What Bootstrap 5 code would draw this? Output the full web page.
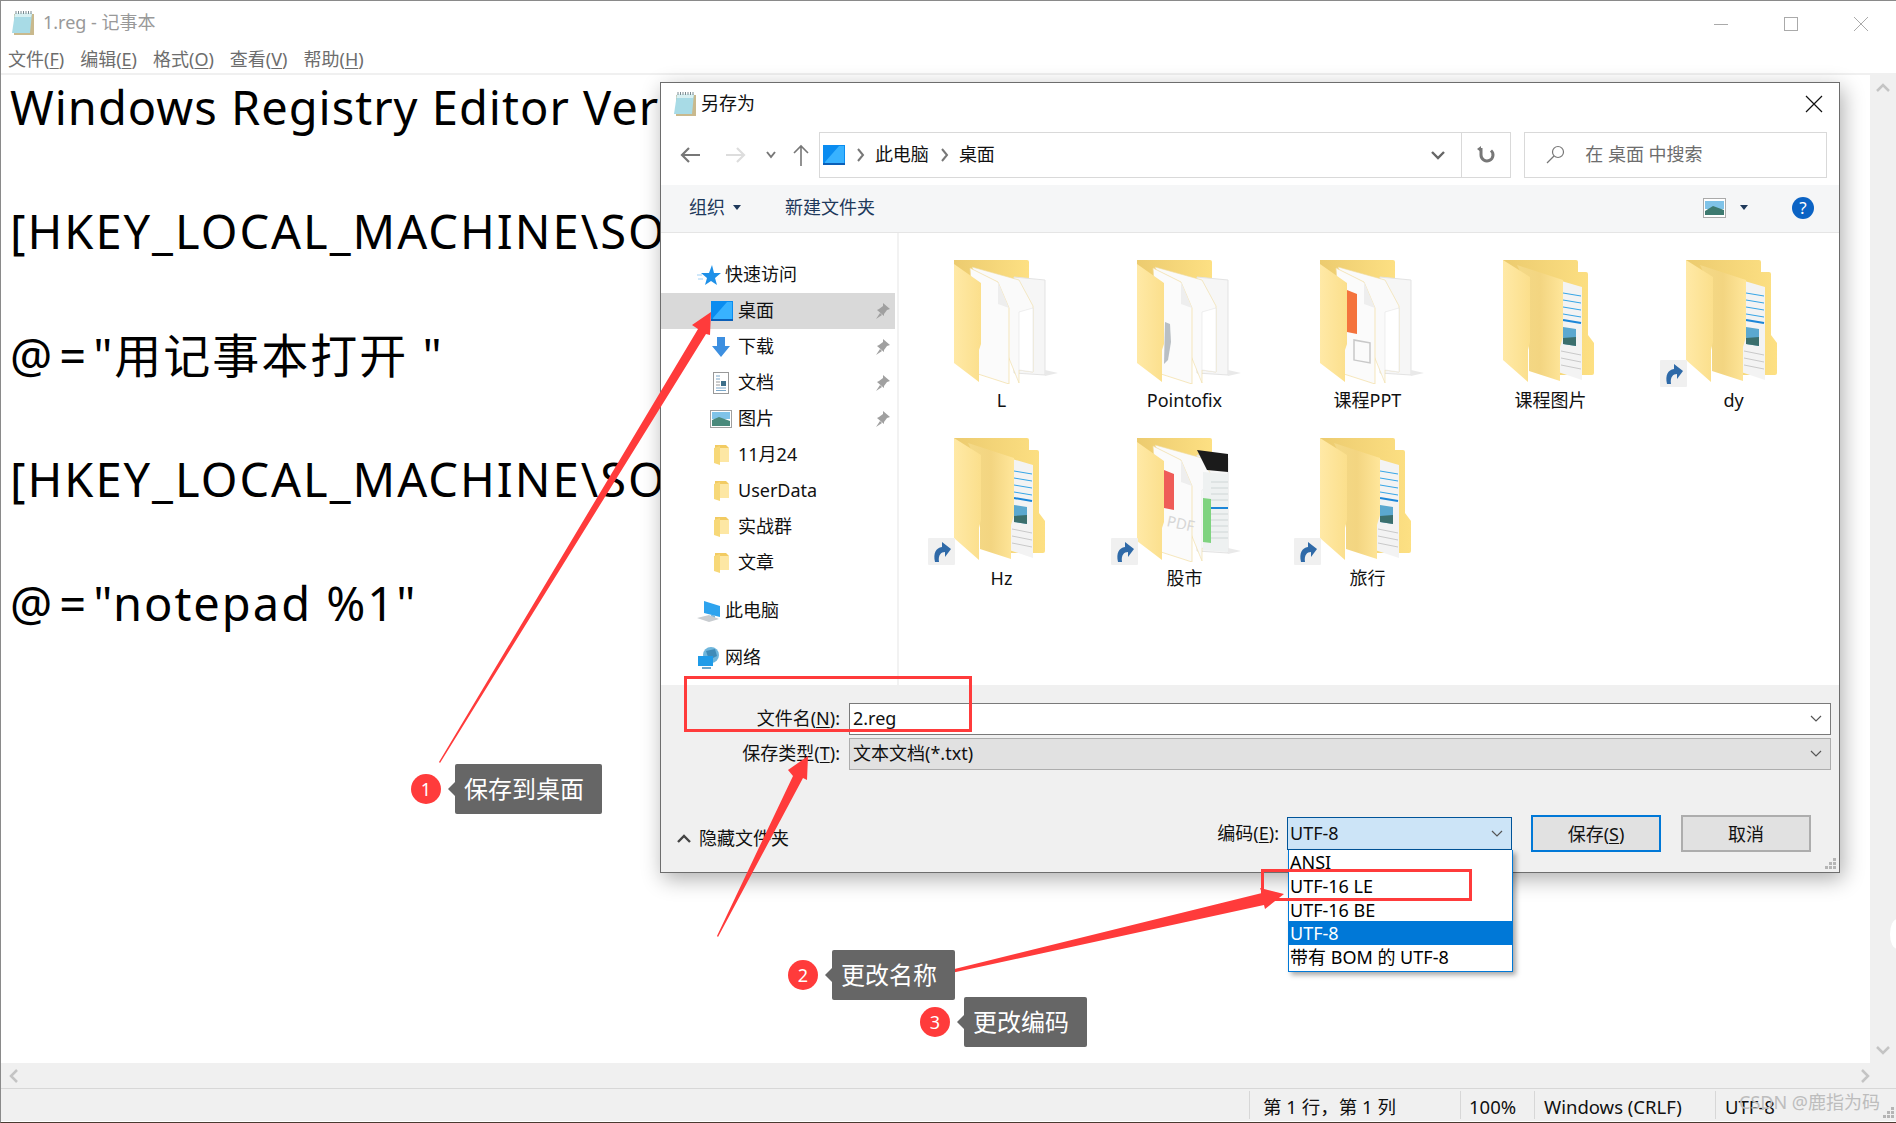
<!DOCTYPE html>
<html lang="zh-CN">
<head>
  <meta charset="UTF-8">
  <title>1.reg - 记事本</title>
  <link href="https://cdn.jsdelivr.net/npm/bootstrap@5.3.0/dist/css/bootstrap.min.css" rel="stylesheet">
  <style>
    html, body { height: 100%; overflow: hidden; }
    body { font-family: "Noto Sans", "Noto Sans CJK SC", sans-serif; font-size: 18px; line-height: 1.2; color: #111; background: #fff; }
    u { text-underline-offset: 2px; text-decoration-thickness: 1px; }

    /* notepad window */
    .np-win { position: relative; height: 1123px; border: 1px solid #8a8a8a; border-bottom-color: #4a3a30; border-right: 0; }
    .np-title { height: 44px; padding-left: 10px; color: #999; }
    .np-ctrl { width: 70px; color: #aaa; }
    .np-menu { height: 30px; padding: 2px 0 0 7px; gap: 16px; color: #6d6d6d; border-bottom: 2px solid #f0f0f0; }
    .np-body { height: 988px; }
    .np-editor { width: 1869px; padding: 1px 0 0 9px; font-size: 47px; letter-spacing: 2px; line-height: 62px; color: #000; white-space: pre; overflow: hidden; }
    .ln-tight { letter-spacing: 1px; }
    .ln-gap { letter-spacing: 7px; }
    .np-vbar { width: 26px; background: #f0f0f0; padding: 8px 0; }
    .np-hbar { height: 25px; background: #f0f0f0; padding: 0 26px 0 8px; }
    .np-status { height: 33px; padding-top: 4px; background: #f0f0f0; border-top: 1px solid #d7d7d7; color: #111; font-size: 18.500px; }
    .st-cell { height: 100%; margin-top: -4px; padding: 4px 0 0 13px; border-left: 1px solid #d7d7d7; }
    .st-pos { margin-left: 1248px; width: 211px; }
    .st-zoom { width: 74px; padding-left: 8px; }
    .st-eol { width: 181px; padding-left: 9px; }
    .st-enc { padding-left: 9px; }
    .st-mark { position: absolute; right: 16px; bottom: 7px; color: #bdbdbd; font-size: 18px; }
    .st-grip { position: absolute; right: 1px; bottom: 2px; }
    .edge-blob { position: absolute; right: -8px; top: 918px; width: 14px; height: 30px; border-radius: 50%; background: #fff; }

    /* save dialog */
    .dlg { position: absolute; left: 659px; top: 81px; width: 1180px; height: 791px; background: #fff; border: 1px solid #6d6d6d; box-shadow: 3px 6px 20px rgba(0,0,0,.32); }
    .dlg-title { height: 49px; padding: 0 16px 7px 12px; }
    .dlg-nav { height: 53px; padding: 0 12px 7px 0; }
    .nav-btns { width: 158px; padding-left: 18px; }
    .nav-fwd { margin-right: 19px; }
    .nav-drop { margin-right: 16px; }
    .addr-box { width: 693px; height: 46px; border: 1px solid #d9d9d9; padding-left: 3px; }
    .addr-sep { margin: 0 10px 0 12px; }
    .addr-drop { margin-left: auto; margin-right: 15px; }
    .addr-refresh { width: 49px; height: 100%; border-left: 1px solid #d9d9d9; }
    .search-box { width: 303px; height: 46px; margin-left: 13px; border: 1px solid #d9d9d9; padding-left: 16px; color: #6d6d6d; }
    .dlg-tools { height: 48px; background: #f5f6f7; border-bottom: 1px solid #e5e5e5; padding: 0 23px 2px 28px; color: #1e395b; }
    .tools-new { margin-left: 44px; }
    .tools-caret { margin-left: 14px; }
    .tools-help { margin-left: 44px; }
    .dlg-main { height: 452px; }
    .side-pane { width: 238px; padding-top: 24px; border-right: 2px solid #f2f2f2; }
    .side-row { height: 36px; padding-left: 49px; width: 234px; }
    .side-row.is-on { background: #d9d9d9; }
    .side-top { height: 36px; padding-left: 36px; }
    .side-ico { width: 24px; margin-right: 4px; flex: none; }
    .side-pc { margin-top: 12px; }
    .side-net { margin-top: 11px; }
    .pin { margin-left: auto; margin-right: 4px; }
    .file-grid { display: grid; grid-template-columns: repeat(5, 183px); grid-auto-rows: 178px; padding: 27px 0 0 11px; }
    .file-cell { position: relative; }
    .file-cell svg.fold { display: block; margin-left: 44px; }
    .file-label { position: absolute; left: 0; right: 0; top: 130px; text-align: center; }
    .shortcut { position: absolute; left: 18px; top: 100px; }

    .dlg-foot { height: 187px; background: #f0f0f0; padding-top: 18px; position: relative; }
    .fld-row { height: 32px; margin-bottom: 3px; }
    .fld-label { width: 188px; text-align: right; padding-right: 9px; }
    .fld-input { width: 982px; height: 32px; border: 1px solid #7a7a7a; background: #fff; padding: 0 8px 0 3px; }
    .fld-input.is-type { background: #e1e1e1; border-color: #adadad; }
    .foot-actions { margin-top: 45px; padding: 0 0 0 12px; }
    .foot-hide { padding-top: 10px; }
    .foot-chev { margin-top: 10px; }
    .enc-select { width: 225px; height: 33px; border: 1px solid #005499; background: #cce4f7; padding: 0 8px 0 2px; }
    .enc-menu { position: absolute; left: 627px; top: 165px; width: 225px; z-index: 3; padding: 0 0 2px; background: #fff; border: 1px solid #0078d7; border-top: 0; border-radius: 0; box-shadow: 3px 3px 5px rgba(0,0,0,.35); }
    .enc-menu .list-group-item { height: 24px; padding: 0 1px; border: 0; border-radius: 0; line-height: 24px; font-size: 18px; color: #000; background: transparent; white-space: pre; }
    .enc-menu .list-group-item.active { background: #0078d7; color: #fff; }
    .dlg-btn { width: 130px; height: 37px; padding: 0; margin-left: 19px; font-size: 18px; line-height: 1; border-radius: 0; background: #e1e1e1; border: 2px solid #adadad; color: #111; }
    .dlg-btn.is-default { border-color: #0078d7; }
    .dlg-btn.is-cancel { margin-right: 28px; margin-left: 20px; }
    .dlg-grip { position: absolute; right: 2px; bottom: 2px; }

    /* annotations */
    .note-layer { position: absolute; left: 0; top: 0; z-index: 5; pointer-events: none; }
    .note { position: absolute; z-index: 6; height: 50px; background: #666; color: #fff; font-size: 24px; border-radius: 2px; padding-left: 9px; }
    .note::before { content: ""; position: absolute; left: -7px; top: 18px; border: 7px solid transparent; border-left: 0; border-right-color: #666; }
    .note-num { position: absolute; z-index: 6; width: 30px; height: 30px; border-radius: 50%; background: #ff3b3b; color: #fff; font-size: 18px; font-weight: 400; padding: 0; }
    .note-a { left: 455px; top: 764px; width: 147px; }
    .note-b { left: 832px; top: 950px; width: 123px; }
    .note-c { left: 964px; top: 997px; width: 123px; }
    .num-a { left: 411px; top: 774px; }
    .num-b { left: 788px; top: 960px; }
    .num-c { left: 920px; top: 1007px; }
  </style>
</head>
<body>

<svg width="0" height="0" class="position-absolute">
  <defs>
    <linearGradient id="gFront" x1="0" y1="0" x2="1" y2="0"><stop offset="0" stop-color="#ffe9a6"/><stop offset="1" stop-color="#fbdf8c"/></linearGradient>
    <linearGradient id="gMid" x1="0" y1="0" x2="1" y2="0"><stop offset="0" stop-color="#f4d987"/><stop offset=".5" stop-color="#f3d581"/><stop offset="1" stop-color="#ffe69a"/></linearGradient>
    <linearGradient id="gBack" x1="0" y1="0" x2="1" y2="0"><stop offset="0" stop-color="#eccb6f"/><stop offset="1" stop-color="#fde083"/></linearGradient>

    <!-- open folder with a white page -->
    <symbol id="foldPaper" viewBox="0 0 104 124">
      <path d="M0 0H73a2 2 0 0 1 2 2V30H0Z" fill="url(#gBack)"/>
      <path d="M60 17 91 20V115L60 113Z" fill="#f6f6f6" stroke="#e3e3e3"/>
      <path d="M91 110 104 113 91 116Z" fill="#e9e9e9"/>
      <path d="M18 7 65 20 79 46V112L65 110V123Z" fill="#fafafa" stroke="#f0dba0" stroke-width=".6"/>
      <path d="M65 52 79 48V112L65 110Z" fill="#fff" stroke="#e4e4e4" stroke-width=".6"/>
      <path d="M16 8 44 22 55 48V124L24 114Z" fill="#fbfbfb" stroke="#f2dda0" stroke-width=".7"/>
      <path d="M44 22 44 44 55 48Z" fill="#eeeeee"/>
      <path d="M0 4 27 23V84L25 90V122L0 103Z" fill="url(#gFront)"/>
    </symbol>
    <!-- folder holding a list page -->
    <symbol id="foldList" viewBox="0 0 104 124">
      <path d="M0 0H73a2 2 0 0 1 2 2V12H83a2 2 0 0 1 2 2V75L91 83V113a2 2 0 0 1-2 2H55V30H0Z" fill="url(#gBack)"/>
      <path d="M55 20 79 27V120L55 112Z" fill="#f3f3f3"/>
      <g stroke="#36a5e6" stroke-width="1"><path d="M60 33 78 36M60 40 78 43M60 47 78 50M60 54 78 57"/><path d="M60 60 78 63" stroke-width="2" stroke="#1c86d8"/></g>
      <path d="M60 67 73 69V86L60 84Z" fill="#5ba8cf"/><path d="M60 78 73 77V86L60 84Z" fill="#3b6f6d"/>
      <g stroke="#c9c9c9" stroke-width="1"><path d="M58 91 78 95M58 98 78 102M58 105 78 109"/></g>
      <path d="M14 5 60 20V77L57 87V121L26 111V30Z" fill="url(#gMid)"/>
      <path d="M0 0 27 17V82L25 90V122L0 100Z" fill="url(#gFront)"/>
    </symbol>
    <symbol id="arrowBadge" viewBox="0 0 27 27">
      <rect width="27" height="27" rx="1" fill="#f0f0f0"/>
      <path d="M7 24C5 15 8 10 14 9V4L23 11 17 19V14C13 14 10 17 11 24Z" fill="#2f6aa8"/>
    </symbol>
    <symbol id="icDesk" viewBox="0 0 22 20">
      <rect width="22" height="20" fill="#0a8cf0"/>
      <path d="M2 17 16 1H21V18H2Z" fill="#38b2ff"/>
      <rect y="18" width="22" height="2" fill="#0b5fb8"/>
    </symbol>
    <symbol id="icFold" viewBox="0 0 16 20">
      <path d="M1 0H12L15 3V17H1Z" fill="#f2cb62"/>
      <path d="M0 3 6 1V20L0 18Z" fill="#f7d878"/>
      <path d="M6 3H15V17H6Z" fill="#fde7a4"/>
    </symbol>
    <symbol id="icPin" viewBox="0 0 16 18">
      <path d="M8 1 15 7 12 8 9 12 9 14 2 8 4 7 8 4ZM5 11 1 17 7 13Z" fill="#a0a0a0"/>
    </symbol>
    <symbol id="icNote" viewBox="0 0 24 24">
      <path d="M3 3H23V24H3Z" fill="#c9b98d"/>
      <path d="M4 2H21L19 22H1Z" fill="#a8dbe6"/>
      <path d="M4 2H21L20 6H3.5Z" fill="#d8f0f2"/>
      <path d="M5 0V3M7.500 0V3M10 0V3M12.500 0V3M15 0V3M17.500 0V3M20 0V3" stroke="#7a8a90" stroke-width="1"/>
    </symbol>
  </defs>
</svg>

<div class="np-win d-flex flex-column">

  <div class="np-title d-flex align-items-center">
    <svg width="24" height="24" class="flex-shrink-0"><use href="#icNote"/></svg>
    <span class="ms-2">1.reg - 记事本</span>
    <div class="d-flex ms-auto align-items-center">
      <div class="np-ctrl text-center"><svg width="16" height="16"><path d="M1 8.500H15" stroke="#aaa"/></svg></div>
      <div class="np-ctrl text-center"><svg width="16" height="16"><rect x="1.500" y="1.500" width="13" height="13" fill="none" stroke="#aaa"/></svg></div>
      <div class="np-ctrl text-center"><svg width="16" height="16"><path d="M1 1 15 15M15 1 1 15" stroke="#aaa"/></svg></div>
    </div>
  </div>

  <div class="np-menu d-flex align-items-center">
    <span>文件(<u>F</u>)</span><span>编辑(<u>E</u>)</span><span>格式(<u>O</u>)</span><span>查看(<u>V</u>)</span><span>帮助(<u>H</u>)</span>
  </div>

  <div class="np-body d-flex">
    <div class="np-editor"><span class="ln-tight">Windows Registry Editor Ver</span>

[HKEY_LOCAL_MACHINE\SO

<span class="ln-gap">@=</span>"用记事本打开 "

[HKEY_LOCAL_MACHINE\SO

<span class="ln-gap">@=</span>"notepad %1"</div>
    <div class="np-vbar d-flex flex-column justify-content-between align-items-center">
      <svg width="14" height="10"><path d="M1 8 7 2 13 8" fill="none" stroke="#c4c4c4" stroke-width="2.500"/></svg>
      <svg width="14" height="10"><path d="M1 2 7 8 13 2" fill="none" stroke="#c4c4c4" stroke-width="2.500"/></svg>
    </div>
  </div>

  <div class="np-hbar d-flex justify-content-between align-items-center">
    <svg width="10" height="14"><path d="M8 1 2 7 8 13" fill="none" stroke="#c4c4c4" stroke-width="2.500"/></svg>
    <svg width="10" height="14"><path d="M2 1 8 7 2 13" fill="none" stroke="#c4c4c4" stroke-width="2.500"/></svg>
  </div>

  <div class="np-status d-flex align-items-center position-relative">
    <div class="st-cell st-pos d-flex align-items-center">第 1 行，第 1 列</div>
    <div class="st-cell st-zoom d-flex align-items-center">100%</div>
    <div class="st-cell st-eol d-flex align-items-center">Windows (CRLF)</div>
    <div class="st-cell st-enc d-flex align-items-center">UTF-8</div>
    <span class="st-mark">CSDN @鹿指为码</span>
    <svg class="st-grip" width="14" height="14"><g fill="#b5b5b5"><rect x="10" y="2" width="3" height="3"/><rect x="6" y="6" width="3" height="3"/><rect x="10" y="6" width="3" height="3"/><rect x="2" y="10" width="3" height="3"/><rect x="6" y="10" width="3" height="3"/><rect x="10" y="10" width="3" height="3"/></g></svg>
  </div>

  <div class="edge-blob"></div>

  <!-- save as dialog -->
  <div class="dlg d-flex flex-column">
    <div class="dlg-title d-flex align-items-center">
      <svg width="24" height="24" class="me-1"><use href="#icNote"/></svg>
      <span>另存为</span>
      <svg class="ms-auto" width="18" height="18"><path d="M1 1 17 17M17 1 1 17" stroke="#111" stroke-width="1.200"/></svg>
    </div>

    <div class="dlg-nav d-flex align-items-center">
      <div class="nav-btns d-flex align-items-center">
        <svg width="22" height="18" class="me-4"><path d="M21 9H3M10 2 3 9 10 16" fill="none" stroke="#777" stroke-width="2.200"/></svg>
        <svg width="22" height="18" class="nav-fwd"><path d="M1 9H19M12 2 19 9 12 16" fill="none" stroke="#ddd" stroke-width="2.200"/></svg>
        <svg width="10" height="8" class="nav-drop"><path d="M1 1 5 6 9 1" fill="none" stroke="#777" stroke-width="2"/></svg>
        <svg width="18" height="22"><path d="M9 22V3M2 9 9 2 16 9" fill="none" stroke="#777" stroke-width="1.600"/></svg>
      </div>
      <div class="addr-box d-flex align-items-center">
        <svg width="22" height="20"><use href="#icDesk"/></svg>
        <svg width="8" height="14" class="addr-sep"><path d="M1 1 6 7 1 13" fill="none" stroke="#777" stroke-width="2"/></svg>
        <span>此电脑</span>
        <svg width="8" height="14" class="addr-sep"><path d="M1 1 6 7 1 13" fill="none" stroke="#777" stroke-width="2"/></svg>
        <span>桌面</span>
        <svg width="16" height="10" class="addr-drop"><path d="M2 2 8 8 14 2" fill="none" stroke="#666" stroke-width="2.400"/></svg>
        <div class="addr-refresh d-flex align-items-center justify-content-center">
          <svg width="20" height="20"><path d="M5 3V10A6 6 0 1 0 15 5.500" fill="none" stroke="#777" stroke-width="3"/><path d="M1 4 5 1V7Z" fill="#777"/></svg>
        </div>
      </div>
      <div class="search-box d-flex align-items-center">
        <svg width="20" height="20" class="me-3 ms-1"><circle cx="13" cy="7" r="5.500" fill="none" stroke="#777" stroke-width="1.200"/><path d="M9 11 2 18" stroke="#777" stroke-width="1.200"/></svg>
        <span class="ms-1">在 桌面 中搜索</span>
      </div>
    </div>

    <div class="dlg-tools d-flex align-items-center">
      <span>组织</span>
      <svg width="8" height="5" class="ms-2"><path d="M0 0H8L4 5Z" fill="#1e395b"/></svg>
      <span class="tools-new">新建文件夹</span>
      <svg width="23" height="20" class="ms-auto"><rect x=".5" y=".5" width="22" height="19" fill="#fff" stroke="#aaa"/><rect x="2" y="3" width="19" height="8" fill="#7fc3e8"/><path d="M2 13 10 8 21 12V17H2Z" fill="#3d7a70"/></svg>
      <svg width="8" height="5" class="tools-caret"><path d="M0 0H8L4 5Z" fill="#1e395b"/></svg>
      <svg width="24" height="24" class="tools-help"><circle cx="11" cy="12" r="11" fill="#0b63c4"/><text x="11" y="18" text-anchor="middle" font-size="17" font-family="Noto Sans" fill="#fff">?</text></svg>
    </div>

    <div class="dlg-main d-flex">
      <div class="side-pane">
        <div class="side-top d-flex align-items-center">
          <svg width="24" height="22" class="side-ico"><path d="M15 1 17 9 24 9 18 14 20 21 14 17 8 21 10 14 4 9 12 9Z" fill="#1e90e8"/><path d="M0 11H5M1 15H6" stroke="#9fd0f5"/></svg><span>快速访问</span>
        </div>
        <div class="side-row is-on d-flex align-items-center">
          <svg width="22" height="20" class="side-ico"><use href="#icDesk"/></svg><span>桌面</span><svg width="16" height="18" class="pin"><use href="#icPin"/></svg>
        </div>
        <div class="side-row d-flex align-items-center">
          <svg width="22" height="20" class="side-ico"><path d="M7 0H15V9H20L11 20 2 9H7Z" fill="#3d8fe0"/></svg><span>下载</span><svg width="16" height="18" class="pin"><use href="#icPin"/></svg>
        </div>
        <div class="side-row d-flex align-items-center">
          <svg width="22" height="22" class="side-ico"><rect x="3.500" y=".5" width="15" height="21" fill="#fff" stroke="#999"/><path d="M6 4H10M6 7H10M6 16H16M6 18.500H16" stroke="#7aa6c8"/><rect x="11" y="9" width="5" height="5" fill="#3d6f8a"/><path d="M6 10H10M6 13H10" stroke="#999"/></svg><span>文档</span><svg width="16" height="18" class="pin"><use href="#icPin"/></svg>
        </div>
        <div class="side-row d-flex align-items-center">
          <svg width="22" height="20" class="side-ico"><rect x=".5" y="1.500" width="21" height="17" fill="#fff" stroke="#a0a0a0"/><rect x="2" y="3" width="18" height="7" fill="#7fc3e8"/><path d="M2 11 9 8 20 12V17H2Z" fill="#4a8a7c"/></svg><span>图片</span><svg width="16" height="18" class="pin"><use href="#icPin"/></svg>
        </div>
        <div class="side-row d-flex align-items-center">
          <svg width="22" height="20" class="side-ico"><use href="#icFold"/></svg><span>11月24</span>
        </div>
        <div class="side-row d-flex align-items-center">
          <svg width="22" height="20" class="side-ico"><use href="#icFold"/></svg><span>UserData</span>
        </div>
        <div class="side-row d-flex align-items-center">
          <svg width="22" height="20" class="side-ico"><use href="#icFold"/></svg><span>实战群</span>
        </div>
        <div class="side-row d-flex align-items-center">
          <svg width="22" height="20" class="side-ico"><use href="#icFold"/></svg><span>文章</span>
        </div>
        <div class="side-top side-pc d-flex align-items-center">
          <svg width="24" height="22" class="side-ico"><path d="M7 1 23 6V17L7 13Z" fill="#2ea3ee"/><path d="M14 15H18V19H14Z" fill="#7ab8e0"/><path d="M0 18 12 15 22 19 12 22Z" fill="#c8ccd0"/></svg><span>此电脑</span>
        </div>
        <div class="side-top side-net d-flex align-items-center">
          <svg width="24" height="24" class="side-ico"><circle cx="14" cy="9" r="8" fill="#6fb6dc"/><path d="M9 5 18 3 20 10 12 14Z" fill="#3f8bb8"/><rect x="1" y="10" width="15" height="10" fill="#1f9be8"/><path d="M5 21H14V23H5Z" fill="#6aa6cc"/></svg><span>网络</span>
        </div>
      </div>

      <div class="file-grid">
        <div class="file-cell">
          <svg class="fold" width="104" height="124"><use href="#foldPaper"/></svg>
          <div class="file-label">L</div>
        </div>
        <div class="file-cell">
          <svg class="fold" width="104" height="124"><use href="#foldPaper"/><path d="M28 62 33 64 34 82 31 100 27 104Z" fill="#b9bfc4"/></svg>
          <div class="file-label">Pointofix</div>
        </div>
        <div class="file-cell">
          <svg class="fold" width="104" height="124"><use href="#foldPaper"/><path d="M27 30 37 34V74L27 72Z" fill="#f4733d"/><rect x="34" y="82" width="16" height="20" transform="skewY(10) translate(0 -8)" fill="none" stroke="#c9c9c9" stroke-width="1.500"/></svg>
          <div class="file-label">课程PPT</div>
        </div>
        <div class="file-cell">
          <svg class="fold" width="104" height="124"><use href="#foldList"/></svg>
          <div class="file-label">课程图片</div>
        </div>
        <div class="file-cell">
          <svg class="fold" width="104" height="124"><use href="#foldList"/></svg>
          <svg class="shortcut" width="27" height="27"><use href="#arrowBadge"/></svg>
          <div class="file-label">dy</div>
        </div>
        <div class="file-cell">
          <svg class="fold" width="104" height="124"><use href="#foldList"/></svg>
          <svg class="shortcut" width="27" height="27"><use href="#arrowBadge"/></svg>
          <div class="file-label">Hz</div>
        </div>
        <div class="file-cell">
          <svg class="fold" width="104" height="124"><use href="#foldPaper"/><path d="M60 12 91 16V34L70 32Z" fill="#1b1b1b"/><path d="M66 34 91 36V114L66 112Z" fill="#eef1f1"/><path d="M66 60 74 61V105L66 104Z" fill="#7fd37f"/><g stroke="#cfd6d6"><path d="M74 44H91M74 50H91M74 56H91M74 62H91M74 76H91M74 82H91M74 88H91M74 94H91M74 100H91"/></g><path d="M74 70H91" stroke="#1c86d8" stroke-width="2"/><path d="M27 32 37 36V72L27 70Z" fill="#ef5c58"/><text x="29" y="88" font-size="15" fill="#d6d6d6" transform="rotate(12 29 88)">PDF</text></svg>
          <svg class="shortcut" width="27" height="27"><use href="#arrowBadge"/></svg>
          <div class="file-label">股市</div>
        </div>
        <div class="file-cell">
          <svg class="fold" width="104" height="124"><use href="#foldList"/></svg>
          <svg class="shortcut" width="27" height="27"><use href="#arrowBadge"/></svg>
          <div class="file-label">旅行</div>
        </div>
      </div>
    </div>

    <div class="dlg-foot">
      <div class="fld-row d-flex align-items-center">
        <div class="fld-label">文件名(<u>N</u>):</div>
        <div class="fld-input d-flex align-items-center justify-content-between"><span>2.reg</span><svg width="12" height="8"><path d="M1 1 6 6 11 1" fill="none" stroke="#555" stroke-width="1.200"/></svg></div>
      </div>
      <div class="fld-row d-flex align-items-center">
        <div class="fld-label">保存类型(<u>T</u>):</div>
        <div class="fld-input is-type d-flex align-items-center justify-content-between"><span>文本文档(*.txt)</span><svg width="12" height="8"><path d="M1 1 6 6 11 1" fill="none" stroke="#555" stroke-width="1.200"/></svg></div>
      </div>
      <div class="foot-actions d-flex align-items-center">
        <svg width="14" height="10" class="me-2 ms-1 foot-chev"><path d="M1 8 7 2 13 8" fill="none" stroke="#444" stroke-width="2.400"/></svg>
        <span class="me-auto foot-hide">隐藏文件夹</span>
        <span class="me-2">编码(<u>E</u>):</span>
        <div class="enc-select d-flex align-items-center justify-content-between"><span>UTF-8</span><svg width="12" height="8"><path d="M1 1 6 6 11 1" fill="none" stroke="#555" stroke-width="1.200"/></svg></div>
        <button class="btn dlg-btn is-default">保存(<u>S</u>)</button>
        <button class="btn dlg-btn is-cancel">取消</button>
      </div>
      <ul class="enc-menu list-group">
        <li class="list-group-item">ANSI</li>
        <li class="list-group-item">UTF-16 LE</li>
        <li class="list-group-item">UTF-16 BE</li>
        <li class="list-group-item active">UTF-8</li>
        <li class="list-group-item">带有 BOM 的 UTF-8</li>
      </ul>
      <svg class="dlg-grip" width="14" height="14"><g fill="#b5b5b5"><rect x="10" y="2" width="3" height="3"/><rect x="6" y="6" width="3" height="3"/><rect x="10" y="6" width="3" height="3"/><rect x="2" y="10" width="3" height="3"/><rect x="6" y="10" width="3" height="3"/><rect x="10" y="10" width="3" height="3"/></g></svg>
    </div>
  </div>
</div>

<!-- red marks drawn over the screenshot -->
<svg class="note-layer" width="1896" height="1123">
  <g fill="none" stroke="#ff3b3b" stroke-width="3">
    <rect x="685.500" y="677.500" width="285" height="53"/>
    <rect x="1262.500" y="870.500" width="208" height="29"/>
  </g>
  <g fill="#ff3b3b">
    <polygon points="439,762 698,329 692,325 711,312 710,335 706,334 440,763"/>
    <polygon points="717,936 793,776 788,770 808,756 807,780 803,778 718,937"/>
    <polygon points="886,986 1262,893 1260,888 1284,894 1265,909 1264,905 887,987"/>
  </g>
</svg>

<span class="badge note-num num-a d-flex align-items-center justify-content-center">1</span>
<div class="note note-a d-flex align-items-center">保存到桌面</div>
<span class="badge note-num num-b d-flex align-items-center justify-content-center">2</span>
<div class="note note-b d-flex align-items-center">更改名称</div>
<span class="badge note-num num-c d-flex align-items-center justify-content-center">3</span>
<div class="note note-c d-flex align-items-center">更改编码</div>

<script src="https://cdn.jsdelivr.net/npm/bootstrap@5.3.0/dist/js/bootstrap.bundle.min.js"></script>
</body>
</html>
